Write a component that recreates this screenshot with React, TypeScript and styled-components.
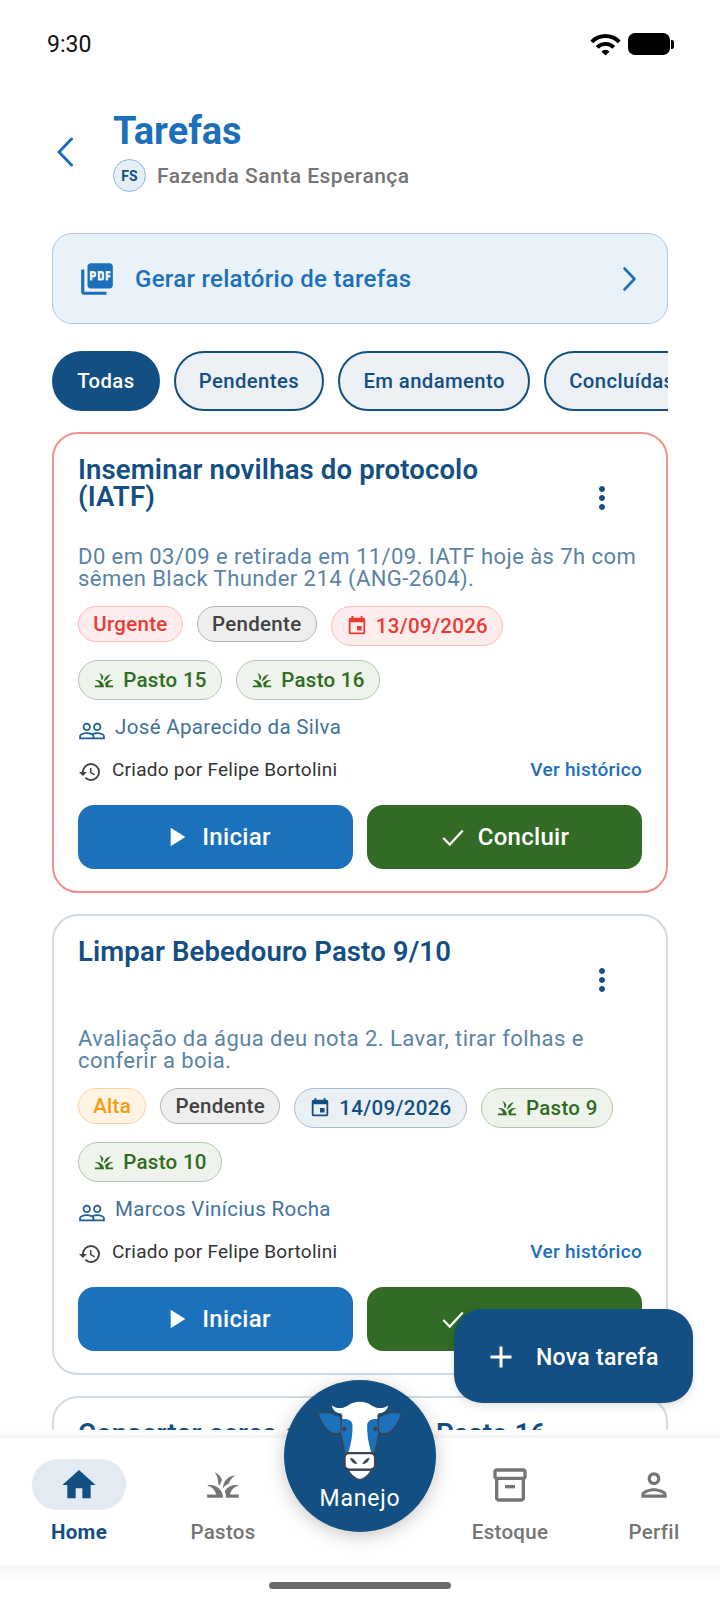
import React from "react";
import styled, { createGlobalStyle } from "styled-components";
import {
  MdPictureAsPdf, MdHome, MdGrass, MdEvent, MdPeopleOutline, MdHistory, MdPlayArrow,
  MdMoreVert, MdOutlineInventory2, MdOutlinePerson, MdWifi, MdAdd,
} from "react-icons/md";

const Global = createGlobalStyle`
  html, body { margin: 0; padding: 0; background: #fff; }
  * { box-sizing: border-box; }
  body { font-family: Roboto, "Liberation Sans", sans-serif; }
`;

const Screen = styled.div`
  position: relative;
  width: 720px;
  height: 1606px;
  overflow: hidden;
  display: flex;
  flex-direction: column;
  background: #fff;
`;

const StatusBar = styled.div`
  height: 86px;
  flex: none;
  padding: 29px 47px 0 47px;
  display: flex;
  justify-content: space-between;
  align-items: flex-start;
`;
const Clock = styled.span`
  font-size: 23px;
  line-height: 30px;
  color: #111;
  position: relative;
  top: 1px;
`;
const StatusIcons = styled.div`
  display: flex;
  align-items: center;
  gap: 6px;
  height: 30px;
  color: #000;
`;
const Battery = styled.div`
  position: relative;
  width: 42px;
  height: 22px;
  border-radius: 7px;
  background: #000;
  margin-right: 3px;
  &::after {
    content: "";
    position: absolute;
    right: -4px;
    top: 7px;
    width: 3px;
    height: 9px;
    border-radius: 0 2px 2px 0;
    background: #000;
  }
`;

const Header = styled.header`
  flex: none;
  height: 147px;
  display: flex;
  align-items: flex-start;
  padding: 26px 0 0 56px;
`;
const BackIcon = styled.svg`
  width: 19px;
  height: 30px;
  margin-top: 25px;
  flex: none;
`;
const HeaderText = styled.div`
  margin-left: 38px;
  display: flex;
  flex-direction: column;
`;
const Title = styled.h1`
  margin: 0;
  font-size: 38px;
  line-height: 38px;
  font-weight: 700;
  color: #1b6fbb;
`;
const FarmRow = styled.div`
  margin-top: 9px;
  display: flex;
  align-items: center;
  gap: 11px;
`;
const FarmBadge = styled.div`
  width: 33px;
  height: 33px;
  border-radius: 50%;
  background: #e6eff8;
  border: 1.5px solid #8fb8dc;
  color: #134f82;
  font-size: 14px;
  font-weight: 700;
  display: flex;
  align-items: center;
  justify-content: center;
`;
const FarmName = styled.span`
  font-size: 21px;
  font-weight: 500;
  color: #757575;
  letter-spacing: 0.48px;
`;

const Content = styled.main`
  flex: 1 1 0;
  min-height: 0;
  overflow: hidden;
  padding: 0 52px;
`;
const ReportCard = styled.div`
  height: 91px;
  border-radius: 20px;
  border: 1.5px solid #a9c9e5;
  background: #eaf2f9;
  display: flex;
  align-items: center;
  padding: 0 30px 0 25px;
  color: #1b6fbb;
`;
const ReportText = styled.span`
  flex: 1;
  margin-left: 19px;
  font-size: 24px;
  font-weight: 500;
  letter-spacing: 0.3px;
`;
const Chips = styled.div`
  margin-top: 27px;
  height: 60px;
  display: flex;
  gap: 14px;
  overflow: hidden;
`;
const Chip = styled.div<{ $active?: boolean }>`
  flex: none;
  height: 60px;
  padding: 0 23.2px;
  border-radius: 30px;
  border: 2px solid #134f82;
  background: ${(p) => (p.$active ? "#134f82" : "#edf1f5")};
  color: ${(p) => (p.$active ? "#fff" : "#134f82")};
  font-size: 20.3px;
  font-weight: 500;
  display: flex;
  align-items: center;
  letter-spacing: 0.4px;
`;

const Card = styled.article<{ $urgent?: boolean }>`
  margin-top: 21px;
  border-radius: 26px;
  border: 2px solid ${(p) => (p.$urgent ? "#f08f88" : "#d2dae2")};
  padding: 22px 24px 22px;
  background: #fff;
`;
const CardHead = styled.div`
  display: flex;
  align-items: flex-start;
  justify-content: space-between;
  height: 67px;
`;
const CardTitle = styled.h2`
  margin: 0;
  width: 476px;
  font-size: 27.5px;
  line-height: 27px;
  font-weight: 600;
  color: #134f82;
  letter-spacing: 0.15px;
`;
const MoreBtn = styled.div`
  margin-top: 18px;
  margin-right: 22px;
  width: 36px;
  height: 48px;
  margin-left: auto;
  flex: none;
  display: flex;
  align-items: center;
  justify-content: center;
  color: #134f82;
`;
const Desc = styled.p`
  margin: 23px 0 0;
  font-size: 22px;
  line-height: 22px;
  color: #5a83a8;
  letter-spacing: 0.44px;
`;
const Tags = styled.div`
  margin-top: 16px;
  display: flex;
  flex-wrap: wrap;
  gap: 14px;
  align-items: flex-start;
`;
type Tone = "red" | "gray" | "green" | "orange" | "blue";
const toneMap: Record<Tone, [string, string, string]> = {
  red: ["#fdecec", "#f8bdba", "#ea3a34"],
  gray: ["#eeeeee", "#b4b4b4", "#424242"],
  green: ["#eef3eb", "#b4c7ae", "#2f6b22"],
  orange: ["#fff4e3", "#fbd59a", "#f59c0c"],
  blue: ["#ebf0f5", "#a9bdd1", "#134f82"],
};
const Tag = styled.span<{ $tone: Tone; $tall?: boolean }>`
  height: ${(p) => (p.$tall ? "40px" : "36px")};
  padding: 0 14.2px;
  border-radius: 20px;
  border: 1.5px solid ${(p) => toneMap[p.$tone][1]};
  background: ${(p) => toneMap[p.$tone][0]};
  color: ${(p) => toneMap[p.$tone][2]};
  font-size: 20.5px;
  font-weight: 500;
  letter-spacing: 0.3px;
  display: inline-flex;
  align-items: center;
  gap: 8px;
`;
const Assignee = styled.div`
  margin-top: 15px;
  height: 24px;
  display: flex;
  align-items: center;
  gap: 9px;
  color: #3f729f;
  font-size: 20.5px;
  letter-spacing: 0.35px;
`;
const AssigneeIcon = styled.span`
  display: flex;
  color: #1f5e96;
  margin-top: 8px;
`;
const CreatedRow = styled.div`
  margin-top: 19px;
  height: 22px;
  display: flex;
  align-items: center;
  justify-content: space-between;
`;
const Creator = styled.span`
  display: flex;
  align-items: center;
  gap: 10px;
  font-size: 19px;
  color: #333;
  letter-spacing: 0.25px;
`;
const CreatorIcon = styled.span`
  display: flex;
  margin-top: 5px;
  color: #444;
`;
const HistoryLink = styled.span`
  font-size: 19px;
  font-weight: 500;
  color: #1b6fbb;
  letter-spacing: 0.3px;
`;
const Actions = styled.div`
  margin-top: 25px;
  display: grid;
  grid-template-columns: 1fr 1fr;
  gap: 14px;
`;
const ActionBtn = styled.button<{ $kind: "start" | "done" }>`
  height: 64px;
  border: 0;
  border-radius: 16px;
  background: ${(p) => (p.$kind === "start" ? "#1c71bc" : "#326b25")};
  color: #fff;
  font: 500 24px Roboto, sans-serif;
  letter-spacing: 0.3px;
  display: flex;
  align-items: center;
  justify-content: center;
  gap: ${(p) => (p.$kind === "start" ? "10px" : "12px")};
`;

const NavShade = styled.div`
  flex: none;
  height: 8px;
  background: linear-gradient(#fff, #f4f4f4);
`;
const Nav = styled.nav`
  flex: none;
  height: 127px;
  background: #fff;
  display: grid;
  grid-template-columns: 130px 130px 129px 130px 130px;
  column-gap: 14px;
  padding: 21px 0 0 14px;
`;
const NavItem = styled.div<{ $active?: boolean }>`
  display: flex;
  flex-direction: column;
  align-items: center;
  color: ${(p) => (p.$active ? "#134f82" : "#757575")};
`;
const NavIconBox = styled.div<{ $active?: boolean }>`
  width: 94px;
  height: 51px;
  border-radius: 26px;
  background: ${(p) => (p.$active ? "#e3eaf2" : "transparent")};
  display: flex;
  align-items: center;
  justify-content: center;
`;
const NavLabel = styled.span<{ $active?: boolean }>`
  margin-top: 10px;
  font-size: 20.5px;
  line-height: 24px;
  font-weight: ${(p) => (p.$active ? 700 : 500)};
  letter-spacing: 0.3px;
`;
const BottomStrip = styled.div`
  flex: none;
  height: 41px;
  background: linear-gradient(#f7f7f7, #fff 16px);
  display: flex;
  justify-content: center;
  padding-top: 17px;
`;
const HomeBar = styled.div`
  width: 182px;
  height: 7px;
  border-radius: 4px;
  background: #6b6b6b;
`;

const Fab = styled.div`
  position: absolute;
  left: 454px;
  top: 1309px;
  width: 239px;
  height: 94px;
  border-radius: 28px;
  background: #134f82;
  color: #fff;
  display: flex;
  align-items: center;
  padding: 2px 0 0 29px;
  gap: 17px;
  font-size: 23px;
  font-weight: 500;
  letter-spacing: 0.3px;
  box-shadow: 0 3px 8px rgba(0, 0, 0, 0.12);
`;
const Manejo = styled.div`
  position: absolute;
  left: 284px;
  top: 1380px;
  width: 152px;
  height: 152px;
  border-radius: 50%;
  background: #134f82;
  color: #fff;
  box-shadow: 0 4px 18px rgba(0, 0, 0, 0.22);
  display: flex;
  flex-direction: column;
  align-items: center;
  padding-top: 20px;
`;
const ManejoLabel = styled.span`
  margin-top: 6px;
  font-size: 23px;
  line-height: 26px;
  letter-spacing: 0.8px;
`;

const cowDark = "#3a4450";
const Cow = () => (
  <svg width="86" height="80" viewBox="148 92 250 235" aria-hidden="true">
    <path d="M150 132 C170 124 196 130 216 142 L222 182 C198 206 166 182 150 132Z" fill="#1c71bc" stroke={cowDark} strokeWidth="4" strokeLinejoin="round" />
    <path d="M395 132 C375 124 349 130 329 142 L323 182 C347 206 379 182 395 132Z" fill="#1c71bc" stroke={cowDark} strokeWidth="4" strokeLinejoin="round" />
    <path d="M190 108 C205 118 222 118 238 108 C255 94 290 94 307 108 C323 118 340 118 356 108 C352 125 340 130 326 132 L327 190 L316 252 L229 252 L218 190 L219 132 C205 130 194 125 190 108Z" fill="#fff" />
    <path d="M219 148 C232 146 250 150 251 165 C252 190 248 218 238 250 L229 250 C225 228 219 205 218 190Z" fill="#1c71bc" />
    <path d="M326 148 C313 146 295 150 294 165 C293 190 297 218 307 250 L316 250 C320 228 326 205 327 190Z" fill="#1c71bc" />
    <path d="M219 136 L217 190 C221 215 227 238 232 262 M326 136 L328 190 C324 215 318 238 313 262" fill="none" stroke={cowDark} strokeWidth="4" />
    <ellipse cx="227" cy="177" rx="6" ry="7" fill={cowDark} />
    <ellipse cx="318" cy="177" rx="6" ry="7" fill={cowDark} />
    <path d="M238 298 C250 316 262 325 272.5 325 C283 325 295 316 307 298Z" fill="#fff" stroke={cowDark} strokeWidth="3" />
    <path d="M241 248 H304 Q317 248 317 262 V284 Q317 295 304 296 H241 Q228 295 228 284 V262 Q228 248 241 248Z" fill="#fff" stroke={cowDark} strokeWidth="6" />
    <path d="M245 263 C248 274 255 279 264 279 C258 270 254 264 245 263Z M300 263 C297 274 290 279 281 279 C287 270 291 264 300 263Z" fill={cowDark} stroke={cowDark} strokeWidth="2" />
  </svg>
);

type TagData = { label: string; tone: Tone; icon?: "date" | "grass" };

const TaskCard = ({ urgent, title, desc, tags, who }: { urgent?: boolean; title: string; desc: string; tags: TagData[]; who: string }) => (
  <Card $urgent={urgent}>
    <CardHead>
      <CardTitle>{title}</CardTitle>
      <MoreBtn><MdMoreVert size={36} /></MoreBtn>
    </CardHead>
    <Desc>{desc}</Desc>
    <Tags>
      {tags.map((t) => (
        <Tag key={t.label} $tone={t.tone} $tall={!!t.icon}>
          {t.icon === "date" && <MdEvent size={22} />}
          {t.icon === "grass" && <MdGrass size={22} />}
          {t.label}
        </Tag>
      ))}
    </Tags>
    <Assignee>
      <AssigneeIcon><MdPeopleOutline size={28} /></AssigneeIcon>
      {who}
    </Assignee>
    <CreatedRow>
      <Creator>
        <CreatorIcon><MdHistory size={24} /></CreatorIcon>
        Criado por Felipe Bortolini
      </Creator>
      <HistoryLink>Ver histórico</HistoryLink>
    </CreatedRow>
    <Actions>
      <ActionBtn $kind="start"><MdPlayArrow size={32} />Iniciar</ActionBtn>
      <ActionBtn $kind="done">
        <svg width="26" height="26" viewBox="0 0 24 24" fill="none" stroke="#fff" strokeWidth="2"><path d="M3 13l6 6L21 6" /></svg>
        Concluir
      </ActionBtn>
    </Actions>
  </Card>
);

export default function App() {
  return (
    <Screen>
      <Global />
      <StatusBar>
        <Clock>9:30</Clock>
        <StatusIcons>
          <MdWifi size={33} />
          <Battery />
        </StatusIcons>
      </StatusBar>
      <Header>
        <BackIcon viewBox="0 0 19 30" fill="none" stroke="#1b6fbb" strokeWidth="3" strokeLinecap="round" strokeLinejoin="round">
          <path d="M15.5 2 L3 15 L15.5 28" />
        </BackIcon>
        <HeaderText>
          <Title>Tarefas</Title>
          <FarmRow>
            <FarmBadge>FS</FarmBadge>
            <FarmName>Fazenda Santa Esperança</FarmName>
          </FarmRow>
        </HeaderText>
      </Header>
      <Content>
        <ReportCard>
          <MdPictureAsPdf size={38} />
          <ReportText>Gerar relatório de tarefas</ReportText>
          <svg width="15" height="26" viewBox="0 0 15 26" fill="none" stroke="#1b6fbb" strokeWidth="2.6" strokeLinecap="round" strokeLinejoin="round">
            <path d="M2.5 2.5 L12.5 13 L2.5 23.5" />
          </svg>
        </ReportCard>
        <Chips>
          <Chip $active>Todas</Chip>
          <Chip>Pendentes</Chip>
          <Chip>Em andamento</Chip>
          <Chip>Concluídas</Chip>
        </Chips>
        <TaskCard
          urgent
          title="Inseminar novilhas do protocolo (IATF)"
          desc="D0 em 03/09 e retirada em 11/09. IATF hoje às 7h com sêmen Black Thunder 214 (ANG-2604)."
          who="José Aparecido da Silva"
          tags={[
            { label: "Urgente", tone: "red" },
            { label: "Pendente", tone: "gray" },
            { label: "13/09/2026", tone: "red", icon: "date" },
            { label: "Pasto 15", tone: "green", icon: "grass" },
            { label: "Pasto 16", tone: "green", icon: "grass" },
          ]}
        />
        <TaskCard
          title="Limpar Bebedouro Pasto 9/10"
          desc="Avaliação da água deu nota 2. Lavar, tirar folhas e conferir a boia."
          who="Marcos Vinícius Rocha"
          tags={[
            { label: "Alta", tone: "orange" },
            { label: "Pendente", tone: "gray" },
            { label: "14/09/2026", tone: "blue", icon: "date" },
            { label: "Pasto 9", tone: "green", icon: "grass" },
            { label: "Pasto 10", tone: "green", icon: "grass" },
          ]}
        />
        <TaskCard
          title="Consertar cerca divisória do Pasto 16"
          desc=""
          who=""
          tags={[]}
        />
      </Content>
      <NavShade />
      <Nav>
        <NavItem $active>
          <NavIconBox $active><MdHome size={40} /></NavIconBox>
          <NavLabel $active>Home</NavLabel>
        </NavItem>
        <NavItem>
          <NavIconBox><MdGrass size={38} /></NavIconBox>
          <NavLabel>Pastos</NavLabel>
        </NavItem>
        <div />
        <NavItem>
          <NavIconBox><MdOutlineInventory2 size={40} /></NavIconBox>
          <NavLabel>Estoque</NavLabel>
        </NavItem>
        <NavItem>
          <NavIconBox><MdOutlinePerson size={38} /></NavIconBox>
          <NavLabel>Perfil</NavLabel>
        </NavItem>
      </Nav>
      <BottomStrip><HomeBar /></BottomStrip>
      <Fab><MdAdd size={36} />Nova tarefa</Fab>
      <Manejo>
        <Cow />
        <ManejoLabel>Manejo</ManejoLabel>
      </Manejo>
    </Screen>
  );
}
